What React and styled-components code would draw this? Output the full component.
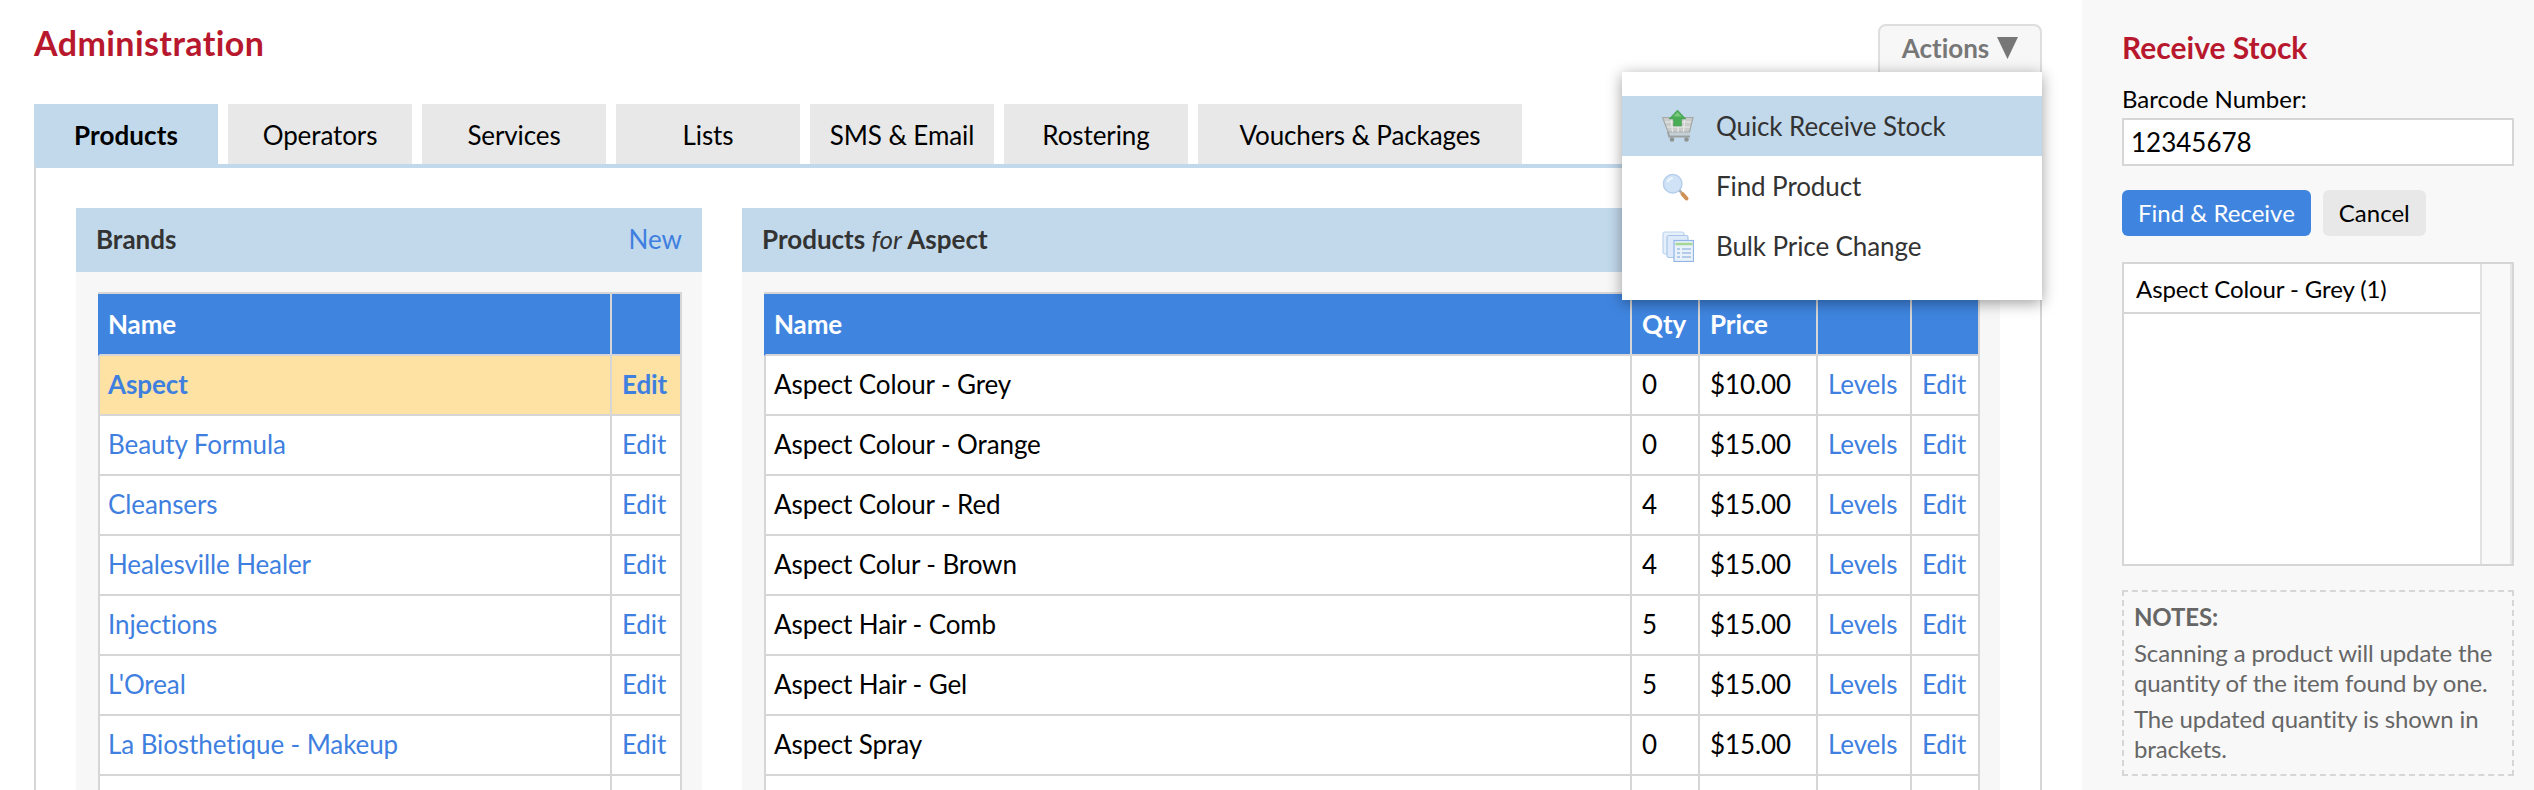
import React from 'react';
import styled, { createGlobalStyle } from 'styled-components';

const GlobalStyle = createGlobalStyle`
  html, body {
    margin: 0;
    padding: 0;
    height: 790px;
    overflow: hidden;
    background: #fff;
  }
  body {
    font-family: Lato, "Open Sans", "Liberation Sans", sans-serif;
    font-size: 26px;
    color: #000;
    font-variant-ligatures: none;
    letter-spacing: -0.1px;
  }
  * { box-sizing: border-box; }
`;

const RED = '#b8182d';
const BLUE = '#3f85e0';
const LINK = '#3f7fdf';
const SKY = '#c2d9ec';
const LINE = '#d6d6d6';

const Page = styled.div`
  display: flex;
  width: 2534px;
  height: 790px;
  overflow: hidden;
`;

const Main = styled.main`
  flex: 1;
  min-width: 0;
  padding: 0 40px 0 34px;
`;

const TopBar = styled.header`
  display: flex;
  justify-content: space-between;
  align-items: flex-start;
  height: 104px;
  padding-top: 24px;
`;

const Title = styled.h1`
  margin: 0;
  font-size: 34px;
  line-height: 38px;
  font-weight: 700;
  letter-spacing: 0.42px;
  color: ${RED};
`;

const ActionsWrap = styled.div`
  position: relative;
  width: 164px;
  z-index: 5;
`;

const ActionsButton = styled.button`
  display: flex;
  align-items: center;
  justify-content: center;
  gap: 8px;
  width: 100%;
  height: 50px;
  padding: 0 0 2px;
  border: 2px solid #dedede;
  border-radius: 8px 8px 0 0;
  background: #f7f7f7;
  color: #777;
  font: 700 26px/1 Lato, sans-serif;
  font-variant-ligatures: none;
`;

const Menu = styled.ul`
  position: absolute;
  top: 48px;
  right: 0;
  width: 420px;
  margin: 0;
  padding: 24px 0;
  list-style: none;
  background: #fff;
  box-shadow: 0 3px 14px rgba(0, 0, 0, 0.38);
`;

const MenuItem = styled.li`
  display: flex;
  align-items: center;
  height: 60px;
  padding-left: 40px;
  gap: 22px;
  color: #333;
  font-size: 26px;
  background: ${(p) => (p.$active ? SKY : 'transparent')};

  svg {
    width: 32px;
    height: 32px;
    flex: none;
  }
`;

const Tabs = styled.nav`
  display: flex;
  gap: 10px;
  height: 60px;
`;

const Tab = styled.div`
  display: flex;
  align-items: center;
  justify-content: center;
  flex: none;
  width: ${(p) => (p.$wide ? '324px' : '184px')};
  padding-top: 2px;
  background: ${(p) => (p.$active ? SKY : '#e8e8e8')};
  font-weight: ${(p) => (p.$active ? 700 : 400)};
  letter-spacing: ${(p) => (p.$active ? '0.1px' : '-0.1px')};
  font-size: 26px;
`;

const Frame = styled.section`
  display: flex;
  gap: 40px;
  height: 700px;
  padding: 40px;
  border-top: 4px solid ${SKY};
  border-left: 2px solid ${LINE};
  border-right: 2px solid ${LINE};
`;

const Panel = styled.div`
  flex: ${(p) => (p.$wide ? '0 0 1258px' : '0 0 626px')};
  background: #f7f7f7;
`;

const PanelHead = styled.div`
  display: flex;
  align-items: center;
  justify-content: space-between;
  height: 64px;
  padding: 0 20px 3px;
  background: ${SKY};
  color: #333;
  font-size: 26px;
  font-weight: 700;
  letter-spacing: 0;

  em {
    font-weight: 400;
  }
`;

const PanelBody = styled.div`
  padding: 20px 20px 0 22px;
`;

const Link = styled.a`
  color: ${LINK};
  font-weight: ${(p) => (p.$bold ? 700 : 400)};
  text-decoration: none;
`;

const Table = styled.table`
  width: 100%;
  table-layout: fixed;
  border-collapse: separate;
  border-spacing: 0;
  border-top: 2px solid ${LINE};
  font-size: 26px;

  th {
    height: 62px;
    padding: 0 10px;
    text-align: left;
    font-weight: 700;
    color: #fff;
    background: ${BLUE};
    border-right: 2px solid ${LINE};
    border-bottom: 2px solid ${LINE};
  }

  th:first-child {
    border-left: 2px solid ${BLUE};
    padding-left: 8px;
  }

  td {
    height: 60px;
    padding: 0 10px 2px;
    background: #fff;
    white-space: nowrap;
    border-right: 2px solid ${LINE};
    border-bottom: 2px solid ${LINE};
  }

  td:first-child {
    border-left: 2px solid ${LINE};
    padding-left: 8px;
  }

  tr.selected td {
    background: #fde2a3;
  }
`;

const Sidebar = styled.aside`
  flex: 0 0 452px;
  padding: 28px 20px 0 40px;
  background: #f8f8f8;
`;

const SideTitle = styled.h2`
  margin: 0 0 16px;
  font-size: 30px;
  line-height: 38px;
  font-weight: 700;
  letter-spacing: 0;
  color: ${RED};
`;

const FieldLabel = styled.label`
  display: block;
  margin-bottom: 2px;
  font-size: 24px;
  line-height: 34px;
  letter-spacing: 0;
`;

const BarcodeInput = styled.input`
  display: block;
  width: 100%;
  height: 48px;
  padding: 0 7px;
  border: 2px solid ${LINE};
  border-radius: 0;
  outline: none;
  background: #fff;
  color: #000;
  font: 400 26px Lato, sans-serif;
`;

const ButtonRow = styled.div`
  display: flex;
  gap: 12px;
  margin: 24px 0 26px;
`;

const Button = styled.button`
  height: 46px;
  padding: 0 16px 2px;
  border: 0;
  border-radius: 6px;
  font: 400 24px Lato, sans-serif;
  font-variant-ligatures: none;
  background: ${(p) => (p.$primary ? BLUE : '#e8e8e8')};
  color: ${(p) => (p.$primary ? '#fff' : '#000')};
`;

const ListBox = styled.div`
  display: flex;
  height: 304px;
  border: 2px solid ${LINE};
  background: #fff;
`;

const ListMain = styled.div`
  flex: 1;
  border-right: 2px solid #e2e2e2;
`;

const ListRow = styled.div`
  display: flex;
  align-items: center;
  height: 50px;
  padding-left: 12px;
  border-bottom: 2px solid ${LINE};
  font-size: 24px;
`;

const ListTrack = styled.div`
  flex: 0 0 30px;
  background: #f9f9f9;
  border-right: 2px solid #e6e6e6;
`;

const Notes = styled.div`
  height: 186px;
  margin-top: 24px;
  padding: 10px;
  border: 2px dashed ${LINE};
  color: #666;
  font-size: 24px;
  line-height: 30px;
  letter-spacing: -0.14px;

  strong {
    display: block;
    font-weight: 700;
  }

  p {
    margin: 6px 0 0;
  }
`;

const CartIcon = () => (
  <svg viewBox="0 0 32 32">
    <path d="M0.500 7.500h30.500l-3.500 14.500H6z" fill="#c9ccca" stroke="#a4a8a6" strokeWidth="1.200" />
    <path d="M3 12h26M5 17h23M9 8l1.500 14M16 8v14M23 8l-1.500 14" stroke="#e9ebe9" strokeWidth="1.100" fill="none" />
    <path d="M6 22l1.200 4.500H28" fill="none" stroke="#9b9f9d" strokeWidth="2" />
    <path d="M7.500 24h20" stroke="#c8cbc9" strokeWidth="1.500" />
    <circle cx="10" cy="29.500" r="2.300" fill="#8f9391" />
    <circle cx="24.500" cy="29.500" r="2.300" fill="#8f9391" />
    <path d="M15.500 0l8.500 9h-4.500v7h-8v-7H7z" fill="#49ad55" stroke="#4c9a58" strokeWidth="0.600" />
    <path d="M15.500 2l-4 4.500h8z" fill="#7bcb7f" />
  </svg>
);

const SearchIcon = () => (
  <svg viewBox="0 0 32 32">
    <circle cx="10.700" cy="13.700" r="9.300" fill="#cfe2f6" stroke="#b3cdea" strokeWidth="1.400" />
    <path d="M5.500 12a6 6 0 0 1 5-4" stroke="#eef6fd" strokeWidth="2" fill="none" />
    <path d="M17.500 20.500l2 2" stroke="#a9a9a9" strokeWidth="2.500" />
    <path d="M20.500 24l4 4.500" stroke="#cd9055" strokeWidth="4" strokeLinecap="round" />
  </svg>
);

const SheetsIcon = () => (
  <svg viewBox="0 0 32 32">
    <rect x="1" y="2" width="21" height="22" rx="2" fill="#e6f0fb" stroke="#bcd3ef" strokeWidth="1.200" />
    <rect x="5" y="5.500" width="21" height="22" rx="2" fill="#deeafa" stroke="#aac6ea" strokeWidth="1.200" />
    <rect x="12" y="10.500" width="19.500" height="21" fill="#e9f1fb" stroke="#92b6e4" strokeWidth="1.200" />
    <path d="M13.500 14h17" stroke="#a5d795" strokeWidth="2.500" />
    <path d="M15 19h3M20 19h9M15 23h3M20 23h9M15 27h3M20 27h9" stroke="#a3bfe2" strokeWidth="1.700" />
  </svg>
);

const tabs = ['Products', 'Operators', 'Services', 'Lists', 'SMS & Email', 'Rostering', 'Vouchers & Packages'];

const brands = ['Aspect', 'Beauty Formula', 'Cleansers', 'Healesville Healer', 'Injections', "L'Oreal", 'La Biosthetique - Makeup'];

const products = [
  ['Aspect Colour - Grey', '0', '$10.00'],
  ['Aspect Colour - Orange', '0', '$15.00'],
  ['Aspect Colour - Red', '4', '$15.00'],
  ['Aspect Colur - Brown', '4', '$15.00'],
  ['Aspect Hair - Comb', '5', '$15.00'],
  ['Aspect Hair - Gel', '5', '$15.00'],
  ['Aspect Spray', '0', '$15.00'],
];

const App = () => {
  return (
    <Page>
      <GlobalStyle />
      <Main>
        <TopBar>
          <Title>Administration</Title>
          <ActionsWrap>
            <ActionsButton>
              Actions
              <svg width="21" height="22" viewBox="0 0 21 22">
                <path d="M0 0h21L10.500 22z" fill="#777" />
              </svg>
            </ActionsButton>
            <Menu>
              <MenuItem $active>
                <CartIcon />
                Quick Receive Stock
              </MenuItem>
              <MenuItem>
                <SearchIcon />
                Find Product
              </MenuItem>
              <MenuItem>
                <SheetsIcon />
                Bulk Price Change
              </MenuItem>
            </Menu>
          </ActionsWrap>
        </TopBar>

        <Tabs>
          {tabs.map((t, i) => (
            <Tab key={t} $active={i === 0} $wide={i === 6}>
              {t}
            </Tab>
          ))}
        </Tabs>

        <Frame>
          <Panel>
            <PanelHead>
              Brands
              <Link href="#">New</Link>
            </PanelHead>
            <PanelBody>
              <Table>
                <colgroup>
                  <col />
                  <col width="70" />
                </colgroup>
                <thead>
                  <tr>
                    <th>Name</th>
                    <th />
                  </tr>
                </thead>
                <tbody>
                  {brands.map((b, i) => (
                    <tr key={b} className={i === 0 ? 'selected' : undefined}>
                      <td><Link href="#" $bold={i === 0}>{b}</Link></td>
                      <td><Link href="#" $bold={i === 0}>Edit</Link></td>
                    </tr>
                  ))}
                  <tr>
                    <td />
                    <td />
                  </tr>
                </tbody>
              </Table>
            </PanelBody>
          </Panel>

          <Panel $wide>
            <PanelHead>
              <span>Products <em>for</em> Aspect</span>
            </PanelHead>
            <PanelBody>
              <Table>
                <colgroup>
                  <col />
                  <col width="68" />
                  <col width="118" />
                  <col width="94" />
                  <col width="68" />
                </colgroup>
                <thead>
                  <tr>
                    <th>Name</th>
                    <th>Qty</th>
                    <th>Price</th>
                    <th />
                    <th />
                  </tr>
                </thead>
                <tbody>
                  {products.map(([name, qty, price]) => (
                    <tr key={name}>
                      <td>{name}</td>
                      <td>{qty}</td>
                      <td>{price}</td>
                      <td><Link href="#">Levels</Link></td>
                      <td><Link href="#">Edit</Link></td>
                    </tr>
                  ))}
                  <tr>
                    <td />
                    <td />
                    <td />
                    <td />
                    <td />
                  </tr>
                </tbody>
              </Table>
            </PanelBody>
          </Panel>
        </Frame>
      </Main>

      <Sidebar>
        <SideTitle>Receive Stock</SideTitle>
        <FieldLabel>Barcode Number:</FieldLabel>
        <BarcodeInput defaultValue="12345678" />
        <ButtonRow>
          <Button $primary>Find &amp; Receive</Button>
          <Button>Cancel</Button>
        </ButtonRow>
        <ListBox>
          <ListMain>
            <ListRow>Aspect Colour - Grey (1)</ListRow>
          </ListMain>
          <ListTrack />
        </ListBox>
        <Notes>
          <strong>NOTES:</strong>
          <p>Scanning a product will update the quantity of the item found by one.</p>
          <p>The updated quantity is shown in brackets.</p>
        </Notes>
      </Sidebar>
    </Page>
  );
};

export default App;
